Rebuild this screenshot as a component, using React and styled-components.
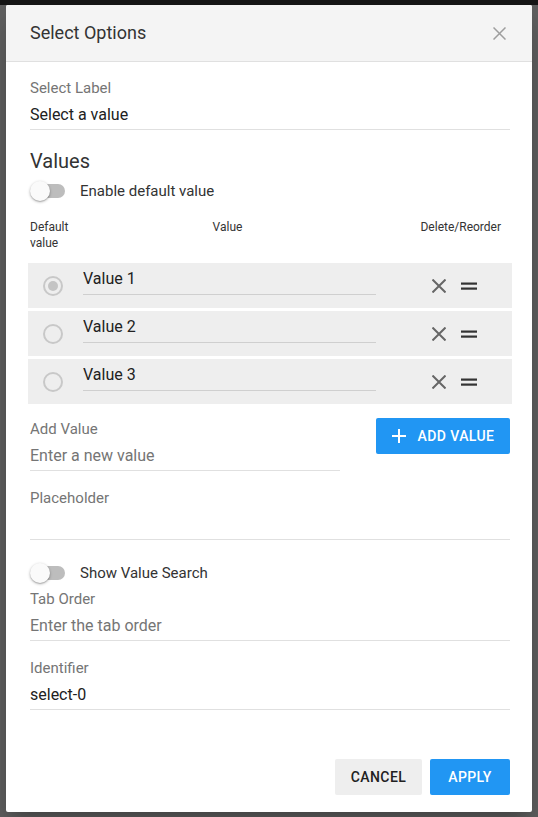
import React from 'react';
import styled, { createGlobalStyle } from 'styled-components';

const Global = createGlobalStyle`
  html, body { margin: 0; padding: 0; }
  body {
    font-family: Roboto, "Liberation Sans", Arial, sans-serif;
    background: linear-gradient(#161616 0 5px, #5f5f5f 5px);
    width: 538px;
    height: 817px;
    overflow: hidden;
  }
  * { box-sizing: border-box; }
`;

const Backdrop = styled.div`
  padding: 5px 6px;
  height: 817px;
`;

const Dialog = styled.div`
  width: 526px;
  height: 807px;
  background: #fff;
  border-radius: 2px;
  box-shadow: 0 11px 15px -7px rgba(0,0,0,.2), 0 24px 38px 3px rgba(0,0,0,.14);
  display: flex;
  flex-direction: column;
  overflow: hidden;
`;

const Header = styled.div`
  flex: none;
  height: 57px;
  background: #f4f4f4;
  border-bottom: 1px solid #e0e0e0;
  display: flex;
  align-items: center;
  justify-content: space-between;
  padding: 0 26px 0 24px;
`;

const Title = styled.h2`
  margin: 0;
  font-size: 18px;
  line-height: 22px;
  font-weight: 400;
  color: #333;
`;

const IconButton = styled.button`
  border: 0;
  background: none;
  padding: 0;
  display: flex;
  cursor: pointer;
`;

const Body = styled.div`
  padding: 18px 22px 0 24px;
  display: flex;
  flex-direction: column;
`;

const Field = styled.div`
  display: flex;
  flex-direction: column;
  width: ${p => p.$width || '100%'};
  margin-top: ${p => p.$mt || 0}px;
`;

const Label = styled.label`
  font-size: 15px;
  line-height: 17px;
  height: 17px;
  color: #757575;
`;

const Input = styled.input`
  border: 0;
  border-bottom: 1px solid #e0e0e0;
  font: 16px/19px Roboto, "Liberation Sans", sans-serif;
  height: 33px;
  padding: 8px 0 5px;
  color: #212121;
  background: transparent;
  outline: none;
  width: 100%;
  &::placeholder { color: #757575; opacity: 1; }
`;

const Heading = styled.h3`
  margin: 19px 0 0;
  font-size: 20px;
  line-height: 24px;
  font-weight: 400;
  color: #333;
`;

const ToggleRow = styled.div`
  display: flex;
  align-items: center;
  height: 24px;
  margin-top: ${p => p.$mt || 0}px;
`;

const Switch = styled.span`
  position: relative;
  width: 35px;
  height: 24px;
  flex: none;
`;

const Track = styled.span`
  position: absolute;
  left: 1px;
  top: 5px;
  width: 34px;
  height: 14px;
  border-radius: 7px;
  background: #bdbdbd;
`;

const Thumb = styled.span`
  position: absolute;
  left: 0;
  top: 2px;
  width: 20px;
  height: 20px;
  border-radius: 50%;
  background: #fafafa;
  box-shadow: 0 1px 3px rgba(0,0,0,.3), 0 1px 1px rgba(0,0,0,.14);
`;

const ToggleLabel = styled.span`
  margin-left: 15px;
  font-size: 15px;
  color: #333;
`;

const ColumnHeader = styled.div`
  margin-top: 16px;
  display: grid;
  grid-template-columns: 55px 285px 1fr;
  font-size: 12px;
  line-height: 16px;
  color: #333;
`;

const ColCell = styled.div`
  text-align: ${p => p.$align || 'left'};
  padding-right: ${p => p.$pr || 0}px;
`;

const Rows = styled.div`
  margin: 12px -2px 0;
  display: flex;
  flex-direction: column;
  gap: 3px;
`;

const Row = styled.div`
  height: 45px;
  background: #eeeeee;
  display: flex;
  align-items: center;
  padding-left: 15px;
`;

const Radio = styled.span`
  width: 20px;
  height: 20px;
  border-radius: 50%;
  border: 2px solid #c8c8c8;
  display: flex;
  align-items: center;
  justify-content: center;
  flex: none;
  &::after {
    content: '';
    width: 10px;
    height: 10px;
    border-radius: 50%;
    background: ${p => (p.$checked ? '#c4c4c4' : 'transparent')};
  }
`;

const RowInput = styled.input`
  align-self: flex-start;
  margin: 6px 0 0 20px;
  width: 293px;
  height: 26px;
  border: 0;
  border-bottom: 1px solid #cfcfcf;
  padding: 0 0 6px;
  font: 16px/19px Roboto, "Liberation Sans", sans-serif;
  color: #212121;
  background: transparent;
  outline: none;
`;

const Actions = styled.div`
  margin-left: 56px;
  display: flex;
  align-items: center;
  gap: 15px;
`;

const AddRow = styled.div`
  margin-top: 14px;
  display: flex;
  justify-content: space-between;
  align-items: flex-start;
`;

const Button = styled.button`
  height: 36px;
  width: ${p => p.$w}px;
  border: 0;
  border-radius: 2px;
  background: ${p => (p.$primary ? '#2196f3' : '#eeeeee')};
  color: ${p => (p.$primary ? '#fff' : '#212121')};
  font: 500 14px Roboto, "Liberation Sans", sans-serif;
  letter-spacing: 0.4px;
  text-transform: uppercase;
  display: flex;
  align-items: center;
  justify-content: center;
  gap: ${p => p.$gap || 0}px;
  padding: 0;
  cursor: pointer;
`;

const Footer = styled.div`
  margin-top: auto;
  padding: 0 22px 17px;
  display: flex;
  justify-content: flex-end;
  gap: 8px;
`;

const CloseIcon = ({ size = 13, color = '#9e9e9e', width = 1.5 }) => (
  <svg width={size} height={size} viewBox={`0 0 ${size} ${size}`}>
    <path d={`M0.5 0.5L${size - 0.5} ${size - 0.5}M${size - 0.5} 0.5L0.5 ${size - 0.5}`} stroke={color} strokeWidth={width} fill="none" />
  </svg>
);

const EqualsIcon = () => (
  <svg width="16" height="8" viewBox="0 0 16 8">
    <rect x="0" y="0.5" width="16" height="2.2" fill="#333" />
    <rect x="0" y="5.5" width="16" height="2.2" fill="#333" />
  </svg>
);

const PlusIcon = () => (
  <svg width="14" height="14" viewBox="0 0 14 14">
    <path d="M7 0V14M0 7H14" stroke="#fff" strokeWidth="2" fill="none" />
  </svg>
);

const Toggle = ({ label, mt }) => (
  <ToggleRow $mt={mt}>
    <Switch>
      <Track />
      <Thumb />
    </Switch>
    <ToggleLabel>{label}</ToggleLabel>
  </ToggleRow>
);

const values = ['Value 1', 'Value 2', 'Value 3'];

export default function App() {
  return (
    <>
      <Global />
      <Backdrop>
        <Dialog>
          <Header>
            <Title>Select Options</Title>
            <IconButton aria-label="close"><CloseIcon /></IconButton>
          </Header>
          <Body>
            <Field>
              <Label>Select Label</Label>
              <Input defaultValue="Select a value" />
            </Field>
            <Heading>Values</Heading>
            <Toggle label="Enable default value" mt={6} />
            <ColumnHeader>
              <ColCell>Default value</ColCell>
              <ColCell $align="center">Value</ColCell>
              <ColCell $align="right" $pr={9}>Delete/Reorder</ColCell>
            </ColumnHeader>
            <Rows>
              {values.map((v, i) => (
                <Row key={v}>
                  <Radio $checked={i === 0} />
                  <RowInput defaultValue={v} />
                  <Actions>
                    <CloseIcon size={14} color="#666" width={2} />
                    <EqualsIcon />
                  </Actions>
                </Row>
              ))}
            </Rows>
            <AddRow>
              <Field $width="310px" $mt={3}>
                <Label>Add Value</Label>
                <Input placeholder="Enter a new value" />
              </Field>
              <Button $primary $w={134} $gap={12}>
                <PlusIcon />
                Add Value
              </Button>
            </AddRow>
            <Field $mt={19}>
              <Label>Placeholder</Label>
              <Input />
            </Field>
            <Toggle label="Show Value Search" mt={21} />
            <Field $mt={6}>
              <Label>Tab Order</Label>
              <Input placeholder="Enter the tab order" />
            </Field>
            <Field $mt={19}>
              <Label>Identifier</Label>
              <Input defaultValue="select-0" />
            </Field>
          </Body>
          <Footer>
            <Button $w={87}>Cancel</Button>
            <Button $primary $w={80}>Apply</Button>
          </Footer>
        </Dialog>
      </Backdrop>
    </>
  );
}
